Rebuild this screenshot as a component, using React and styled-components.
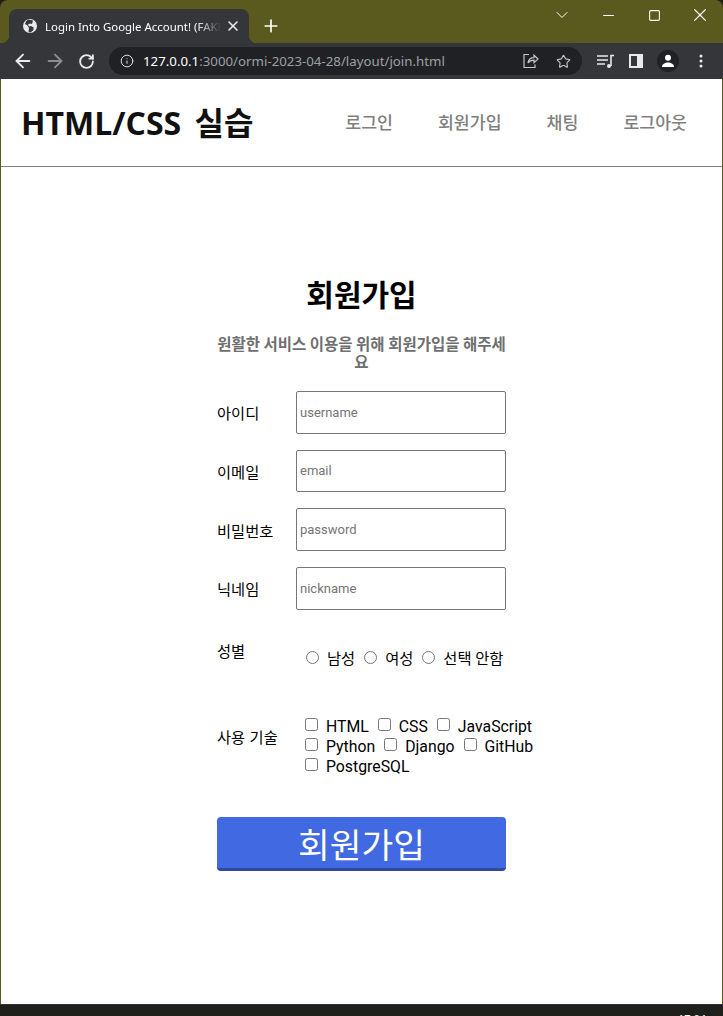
import React from "react";
import styled, { createGlobalStyle } from "styled-components";
import { ArrowLeft, ArrowRight, RotateCw, Info, Star, X, Plus, ChevronDown, Minus, Square } from "lucide-react";

const GlobalStyle = createGlobalStyle`
  html, body { margin: 0; padding: 0; height: 100%; background: #1f201c; }
  #root { height: 100%; }
  * { box-sizing: border-box; }
`;

const sans = `Roboto, "Noto Sans CJK KR", sans-serif`;
const ui = `"Noto Sans", "Noto Sans CJK KR", sans-serif`;

const Screen = styled.div`
  width: 723px;
  height: 1016px;
  display: flex;
  flex-direction: column;
  overflow: hidden;
  background: #5a5a1e;
  border-radius: 8px 8px 0 0;
`;

const TitleBar = styled.div`
  height: 43px;
  flex: none;
  display: flex;
  align-items: flex-end;
  padding-left: 9px;
  color: #fff;
`;

const Tab = styled.div`
  position: relative;
  width: 240px;
  height: 34px;
  background: #35363a;
  border-radius: 8px 8px 0 0;
  display: flex;
  align-items: center;
  padding: 0 8px 0 13px;
  gap: 7px;
  font: 11.45px ${ui};

  &::before,
  &::after {
    content: "";
    position: absolute;
    bottom: 0;
    width: 8px;
    height: 8px;
  }
  &::before {
    left: -8px;
    background: radial-gradient(circle at 0 0, transparent 8px, #35363a 8.5px);
  }
  &::after {
    right: -8px;
    background: radial-gradient(circle at 100% 0, transparent 8px, #35363a 8.5px);
  }
`;

const TabTitle = styled.span`
  flex: 1;
  min-width: 0;
  margin-right: -3px;
  white-space: nowrap;
  overflow: hidden;
  -webkit-mask-image: linear-gradient(to right, #000 86%, transparent 100%);
  mask-image: linear-gradient(to right, #000 86%, transparent 100%);
`;

const NewTab = styled.div`
  margin-left: 12px;
  height: 34px;
  display: flex;
  align-items: center;
`;

const WindowControls = styled.div`
  margin-left: auto;
  align-self: flex-start;
  display: flex;
`;

const WinButton = styled.div`
  width: 46px;
  height: 30px;
  display: flex;
  align-items: center;
  justify-content: center;
`;

const Toolbar = styled.div`
  height: 36px;
  flex: none;
  background: #35363a;
  display: flex;
  align-items: center;
  padding-left: 12px;
  color: #e8eaed;
`;

const NavIcons = styled.div`
  display: flex;
  align-items: center;
  gap: 10px;
`;

const ReloadSlot = styled.div`
  width: 20px;
  display: flex;
  justify-content: center;
`;

const Omnibox = styled.div`
  margin-left: 13px;
  width: 473px;
  height: 28px;
  border-radius: 14px;
  background: #202124;
  display: flex;
  align-items: center;
  padding: 0 11px;
  font: 13.28px ${ui};
  color: #9aa0a6;
`;

const Url = styled.span`
  margin-left: 9px;
  flex: 1;
  white-space: nowrap;
  b { font-weight: 400; color: #fff; }
`;

const OmniActions = styled.div`
  display: flex;
  align-items: center;
  gap: 17px;
  color: #c4c7c5;
`;

const ToolActions = styled.div`
  display: flex;
  align-items: center;
  margin-left: 14px;
  gap: 14px;
`;

const Avatar = styled.div`
  width: 22px;
  height: 22px;
  border-radius: 50%;
  background: #202124;
  display: flex;
  align-items: center;
  justify-content: center;
`;

const Dots = styled.div`
  display: flex;
  margin-left: 6px;
`;

const Page = styled.div`
  flex: 1;
  margin: 0 1px;
  background: #fff;
  display: flex;
  flex-direction: column;
`;

const Header = styled.header`
  height: 88px;
  flex: none;
  border-bottom: 1px solid #808080;
  display: flex;
  align-items: center;
  justify-content: space-between;
  padding: 0 35px 3px 20px;
`;

const Logo = styled.h1`
  margin: 0;
  font: 700 32px "Open Sans", "Noto Sans CJK KR", sans-serif;
  word-spacing: 5px;
  color: #111;
`;

const Nav = styled.nav`
  display: flex;
  gap: 45px;
`;

const NavLink = styled.a`
  font: 500 17.3px "Noto Sans CJK KR", sans-serif;
  color: #7f7f7f;
`;

const Main = styled.main`
  width: 289px;
  margin: 106px 0 0 216px;
  font-family: ${sans};
`;

const Heading = styled.h2`
  margin: 0;
  text-align: center;
  font: 700 30px/40px "Noto Sans CJK KR", sans-serif;
  color: #000;
`;

const Sub = styled.p`
  margin: 21px 0 0;
  text-align: center;
  word-break: break-all;
  font: 700 15.5px/18px "Noto Sans CJK KR", sans-serif;
  color: #6f6f6f;
`;

const Field = styled.div`
  display: flex;
  align-items: center;
  margin-top: ${(p) => p.$top};
  height: 42.67px;
`;

const Label = styled.label`
  width: 79px;
  flex: none;
  font: 15.3px "Noto Sans CJK KR", sans-serif;
  word-spacing: 1px;
  color: #000;
`;

const TextInput = styled.input`
  width: 210px;
  height: 100%;
  border: 1px solid #767676;
  border-radius: 2px;
  padding: 0 3px;
  font: 13px Roboto, sans-serif;
  outline: none;
  &::placeholder { color: #757575; opacity: 1; }
`;

const GroupRow = styled.div`
  display: flex;
  align-items: flex-start;
  margin-top: ${(p) => p.$top};
  height: ${(p) => p.$height || "auto"};
`;

const RowLabel = styled(Label)`
  margin-top: ${(p) => p.$offset};
`;

const Options = styled.div`
  flex: 1;
  padding: ${(p) => p.$top} 0 0 ${(p) => p.$pad};
  margin-right: -40px;
  font: ${(p) => p.$size}/20px ${sans};
  color: #000;
`;

const Radio = styled.input.attrs({ type: "radio" })`
  margin: 0 8px 0 ${(p) => (p.$first ? "0" : "9px")};
  width: 13px;
  height: 13px;
`;

const Check = styled.input.attrs({ type: "checkbox" })`
  margin: 0 8px 0 ${(p) => (p.$first ? "0" : "9px")};
  width: 13px;
  height: 13px;
  vertical-align: 1px;
`;

const Submit = styled.button`
  display: block;
  width: 100%;
  height: 54px;
  margin-top: 40px;
  background: #4169e1;
  border: 0;
  border-bottom: 3px solid #2f4a9f;
  border-radius: 4px;
  color: #fff;
  font: 34.500px "Noto Sans CJK KR", sans-serif;
`;

const Taskbar = styled.div`
  height: 12px;
  flex: none;
  background: #1f201c;
  border-top: 1px solid #333;
  display: flex;
  justify-content: flex-end;
  padding: 8px 17px 0 0;
  overflow: hidden;
  color: #fff;
  font: 11px/12px ${ui};
`;

const Globe = () => (
  <svg width="16" height="16" viewBox="0 0 16 16">
    <circle cx="8" cy="8" r="7" fill="#e8eaed" />
    <path d="M6 1.6 4 3.5 3 6l2.5 1.5L7 10l-.5 4 2 .5 3-2.5V9.5L9 8 7 8.5 6 6.5l2-1 2 .5 1-3.5z" fill="#35363a" />
  </svg>
);

const ShareIcon = () => (
  <svg width="16" height="16" viewBox="0 0 16 16" fill="none" stroke="#c4c7c5" strokeWidth="1.2">
    <path d="M6 1.5H1v13h11v-3" />
    <path d="M5 10c.5-3.500 3-5.300 6-5.300V2.200l4 3.800-4 3.600V7.200C8.500 7.200 6.500 8 5 10z" />
  </svg>
);

const QueueIcon = () => (
  <svg width="19" height="16" viewBox="0 0 19 16" fill="none" stroke="#e8eaed" strokeWidth="1.6">
    <path d="M1 3h11M1 7h11M1 11h8" />
    <path d="M15 13V2.500h3" />
    <circle cx="13" cy="13" r="2" fill="#e8eaed" stroke="none" />
  </svg>
);

const SideIcon = () => (
  <svg width="14" height="14" viewBox="0 0 14 14">
    <path fillRule="evenodd" d="M0 0h14v14H0zM2 2v10h6V2z" fill="#e8eaed" />
  </svg>
);

const PersonIcon = () => (
  <svg width="14" height="14" viewBox="0 0 14 14" fill="#fff">
    <circle cx="7" cy="3.800" r="3" />
    <path d="M1 13c0-3 3-4.500 6-4.500s6 1.500 6 4.500z" />
  </svg>
);

const DotsIcon = () => (
  <svg width="4" height="14" viewBox="0 0 4 14" fill="#e8eaed">
    <circle cx="2" cy="2" r="1.500" />
    <circle cx="2" cy="7" r="1.500" />
    <circle cx="2" cy="12" r="1.500" />
  </svg>
);

const fields = [
  { label: "아이디", placeholder: "username", top: "21px" },
  { label: "이메일", placeholder: "email", top: "16px" },
  { label: "비밀번호", placeholder: "password", top: "16px" },
  { label: "닉네임", placeholder: "nickname", top: "16px" },
];

const navItems = ["로그인", "회원가입", "채팅", "로그아웃"];

const App = () => {
  return (
    <>
      <GlobalStyle />
      <Screen>
        <TitleBar>
          <Tab>
            <Globe />
            <TabTitle>Login Into Google Account! (FAKE</TabTitle>
            <X size={16} strokeWidth={2.4} color="#e8eaed" />
          </Tab>
          <NewTab>
            <Plus size={20} strokeWidth={2} color="#fff" />
          </NewTab>
          <WindowControls>
            <WinButton><ChevronDown size={20} strokeWidth={1.2} /></WinButton>
            <WinButton><Minus size={17} strokeWidth={1.4} /></WinButton>
            <WinButton><Square size={13} strokeWidth={2} /></WinButton>
            <WinButton><X size={22} strokeWidth={1.2} /></WinButton>
          </WindowControls>
        </TitleBar>
        <Toolbar>
          <NavIcons>
            <ArrowLeft size={22} strokeWidth={2} />
            <ArrowRight size={22} strokeWidth={2} color="#8b8d90" />
            <ReloadSlot>
              <RotateCw size={17} strokeWidth={2.6} />
            </ReloadSlot>
          </NavIcons>
          <Omnibox>
            <Info size={14} strokeWidth={1.6} color="#e8eaed" />
            <Url>
              <b>127.0.0.1</b>:3000/ormi-2023-04-28/layout/join.html
            </Url>
            <OmniActions>
              <ShareIcon />
              <Star size={15} strokeWidth={1.8} />
            </OmniActions>
          </Omnibox>
          <ToolActions>
            <QueueIcon />
            <SideIcon />
            <Avatar>
              <PersonIcon />
            </Avatar>
            <Dots>
              <DotsIcon />
            </Dots>
          </ToolActions>
        </Toolbar>
        <Page>
          <Header>
            <Logo>HTML/CSS 실습</Logo>
            <Nav>
              {navItems.map((item) => (
                <NavLink key={item}>{item}</NavLink>
              ))}
            </Nav>
          </Header>
          <Main>
            <Heading>회원가입</Heading>
            <Sub>원활한 서비스 이용을 위해 회원가입을 해주세요</Sub>
            {fields.map((f) => (
              <Field key={f.label} $top={f.top}>
                <Label>{f.label}</Label>
                <TextInput placeholder={f.placeholder} />
              </Field>
            ))}
            <GroupRow $top="29px" $height="40px">
              <RowLabel $offset="0">성별</RowLabel>
              <Options $pad="10px" $top="10px" $size="15.3px">
                <Radio $first name="gender" />남성
                <Radio name="gender" />여성
                <Radio name="gender" />선택 안함
              </Options>
            </GroupRow>
            <GroupRow $top="38px">
              <RowLabel $offset="8px">사용 기술</RowLabel>
              <Options $pad="9px" $top="0" $size="15.8px">
                <Check $first />HTML
                <Check />CSS
                <Check />JavaScript
                <br />
                <Check $first />Python
                <Check />Django
                <Check />GitHub
                <br />
                <Check $first />PostgreSQL
              </Options>
            </GroupRow>
            <Submit>회원가입</Submit>
          </Main>
        </Page>
        <Taskbar>17:04</Taskbar>
      </Screen>
    </>
  );
};

export default App;
